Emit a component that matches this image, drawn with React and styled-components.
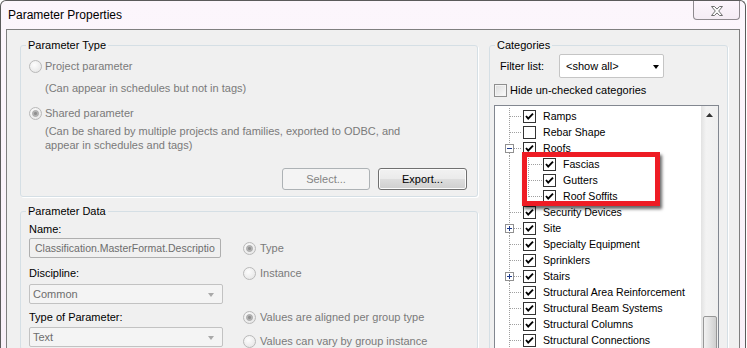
import React from 'react';
import styled, { createGlobalStyle } from 'styled-components';

const GlobalStyle = createGlobalStyle`
  html, body {
    margin: 0;
    padding: 0;
    background: #fff;
  }
  body {
    font-family: "Liberation Sans", Arial, sans-serif;
    font-size: 11px;
    color: #000;
  }
`;

const Window = styled.div`
  width: 746px;
  height: 348px;
  box-sizing: border-box;
  border: 1px solid #5b5b5b;
  border-bottom: none;
  border-radius: 6px 6px 0 0;
  background: linear-gradient(#fcf6fc, #f8f0f8);
  padding: 0 5px;
  display: flex;
  flex-direction: column;
  overflow: hidden;
`;

const TitleBar = styled.div`
  height: 28px;
  flex-shrink: 0;
  display: flex;
  justify-content: space-between;
  align-items: flex-start;
`;

const Title = styled.div`
  font-size: 12px;
  line-height: 14px;
  padding: 7px 0 0 2px;
`;

const CloseButton = styled.div`
  width: 47px;
  height: 19px;
  box-sizing: border-box;
  border: 1px solid #8e8a8e;
  border-top: none;
  border-radius: 0 0 4px 4px;
  background: linear-gradient(#fcf5fc, #f4ecf4);
  display: flex;
  align-items: center;
  justify-content: center;
  padding-top: 1px;
`;

const Client = styled.div`
  flex: 1;
  min-height: 0;
  background: #f0f0f0;
  border: 1px solid #7f7f7f;
  border-bottom: none;
  display: flex;
  gap: 11px;
  padding: 8px 11px 0 13px;
`;

const Column = styled.div`
  width: ${p => p.$width}px;
  flex-shrink: 0;
  display: flex;
  flex-direction: column;
  gap: 7px;
`;

const GroupBox = styled.fieldset`
  margin: 0;
  padding: 0;
  min-width: 0;
  border: 1px solid #d5dfe5;
  border-radius: 3px;
  box-shadow: 1px 1px 0 #fff;
  ${p => p.$grow && 'flex: 1;'}
`;

const Legend = styled.legend`
  margin-left: 5px;
  padding: 0 2px;
  line-height: 14px;
`;

const OptionRow = styled.div`
  display: flex;
  align-items: center;
  gap: ${p => p.$gap ?? 3}px;
  height: 16px;
  margin-top: ${p => p.$top}px;
  padding-left: ${p => p.$indent ?? 0}px;
  color: ${p => (p.$disabled ? '#7a7a7a' : '#000')};
`;

const RadioMark = styled.span`
  position: relative;
  width: 13px;
  height: 13px;
  box-sizing: border-box;
  border-radius: 50%;
  flex-shrink: 0;
  border: 1px solid #b9b9b9;
  background: radial-gradient(circle at 40% 35%, #fdfdfd, #e2e2e2);

  &::after {
    content: '';
    display: ${p => (p.$checked ? 'block' : 'none')};
    position: absolute;
    inset: 2px;
    box-sizing: border-box;
    border-radius: 50%;
    border: 1px solid #a2a2a2;
    background: radial-gradient(circle, #8f8f8f 30%, #c9c9c9 75%);
  }
`;

const Note = styled.div`
  color: #7a7a7a;
  line-height: 14px;
  margin-top: ${p => p.$top}px;
  padding-left: 24px;
`;

const ButtonRow = styled.div`
  display: flex;
  justify-content: flex-end;
  gap: 8px;
  margin-top: 16px;
  padding: 0 10px 6px 0;
`;

const PushButton = styled.button`
  width: ${p => p.$width}px;
  height: 22px;
  box-sizing: border-box;
  font-family: inherit;
  font-size: 11px;
  border-radius: 3px;
  padding: 0;
  border: 1px solid #707070;
  color: #000;
  background: linear-gradient(#f2f2f2 0%, #ebebeb 48%, #dddddd 52%, #cfcfcf 100%);
  box-shadow: inset 0 0 0 1px #fcfcfc;

  &:disabled {
    border-color: #adb2b5;
    color: #838383;
    background: #f4f4f4;
    box-shadow: none;
  }
`;

const DataGrid = styled.div`
  display: grid;
  grid-template-columns: 194px 1fr;
  column-gap: 20px;
  padding-left: 8px;
`;

const Stack = styled.div`
  display: flex;
  flex-direction: column;
`;

const FieldLabel = styled.div`
  line-height: 14px;
  margin-top: ${p => p.$top}px;
`;

const TextField = styled.div`
  width: 192px;
  height: 20px;
  box-sizing: border-box;
  margin-top: 2px;
  border: 1px solid #afafaf;
  border-radius: 2px;
  background: #f0f0f0;
  color: #6d6d6d;
  padding: 0 3px 0 5px;
  font-size: 10.5px;
  line-height: 18px;
  white-space: nowrap;
`;

const ComboBox = styled.div`
  width: ${p => p.$width}px;
  height: ${p => p.$height ?? 20}px;
  box-sizing: border-box;
  margin-top: ${p => p.$top ?? 0}px;
  border: 1px solid ${p => (p.$disabled ? '#c2c2c2' : '#c5c5c5')};
  border-radius: 2px;
  background: ${p => (p.$disabled ? '#f4f4f4' : '#fff')};
  color: ${p => (p.$disabled ? '#6d6d6d' : '#000')};
  display: flex;
  align-items: center;
  justify-content: space-between;
  padding: 0 ${p => (p.$disabled ? 8 : 4)}px 0 ${p => (p.$disabled ? 3 : 6)}px;
`;

const Arrow = styled.span`
  width: 0;
  height: 0;
  border-left: 3.5px solid transparent;
  border-right: 3.5px solid transparent;
  border-top: 4px solid ${p => (p.$disabled ? '#a9a9a9' : '#000')};
  margin-top: 1px;
`;

const CatBody = styled.div`
  display: flex;
  flex-direction: column;
  padding: 0 8px 0 4px;
  height: 100%;
`;

const FilterRow = styled.div`
  display: flex;
  align-items: center;
  height: 24px;
  margin-top: 2px;
`;

const FilterLabel = styled.span`
  width: 59px;
  margin-left: 6px;
`;

const CheckMark = styled.span`
  width: 13px;
  height: 13px;
  box-sizing: border-box;
  flex-shrink: 0;
  border: 1px solid #8f8f8f;
  background: linear-gradient(135deg, #dcdcdc, #fbfbfb);
  box-shadow: inset 0 0 0 1px #f4f4f4;
`;

const ListBox = styled.div`
  position: relative;
  flex: 1;
  margin-top: 7px;
  border: 1px solid #828790;
  background: #fff;
  display: flex;
  min-height: 0;
`;

const TreeRows = styled.div`
  flex: 1;
  padding-top: 2px;
  overflow: hidden;
`;

const TreeRow = styled.div`
  display: flex;
  align-items: center;
  height: 16px;
  white-space: nowrap;
`;

const TreeLabel = styled.span`
  margin-left: 7px;
  font-size: 10.6px;
`;

const ScrollBar = styled.div`
  width: 17px;
  flex-shrink: 0;
  display: flex;
  flex-direction: column;
  background: linear-gradient(to right, #e2e2e2, #f3f3f3 30%, #efefef);
`;

const ScrollButton = styled.div`
  height: 17px;
  display: flex;
  align-items: center;
  justify-content: center;
`;

const Thumb = styled.div`
  margin: 193px 1px 0 2px;
  height: 60px;
  border: 1px solid #979797;
  border-radius: 2px;
  background: linear-gradient(to right, #f1f1f1, #e1e1e1 50%, #cfcfcf);
  display: flex;
  align-items: flex-end;
  justify-content: center;
  padding-bottom: 4px;
`;

const Grip = styled.span`
  width: 6px;
  height: 5px;
  border-top: 1px solid #555;
  border-bottom: 1px solid #555;
  box-sizing: border-box;
  position: relative;

  &::after {
    content: '';
    position: absolute;
    left: 0;
    right: 0;
    top: 1px;
    border-top: 1px solid #555;
  }
`;

const Highlight = styled.div`
  position: absolute;
  left: 27px;
  top: 46px;
  width: 138px;
  height: 54px;
  box-sizing: border-box;
  border: 5px solid #ee1c24;
  box-shadow: 2px 3px 3px rgba(0, 0, 0, 0.6);
  pointer-events: none;
`;

const dots = { stroke: '#a0a0a0', strokeDasharray: '1 1', strokeWidth: 1 };

function Connector({ level, expander, last }) {
  const w = level === 1 ? 28 : 48;
  return (
    <svg width={w} height={16} style={{ flexShrink: 0 }}>
      {expander ? (
        <>
          <line x1={14.5} y1={0} x2={14.5} y2={4} {...dots} />
          <line x1={14.5} y1={13} x2={14.5} y2={16} {...dots} />
        </>
      ) : (
        <line x1={14.5} y1={0} x2={14.5} y2={16} {...dots} />
      )}
      {level === 1 && <line x1={expander ? 19 : 15} y1={8.5} x2={27} y2={8.5} {...dots} />}
      {level === 2 && (
        <>
          <line x1={33.5} y1={0} x2={33.5} y2={last ? 9 : 16} {...dots} />
          <line x1={34} y1={8.5} x2={47} y2={8.5} {...dots} />
        </>
      )}
      {expander && (
        <>
          <rect x={10.5} y={4.5} width={8} height={8} fill="#fff" stroke="#919191" />
          <line x1={12} y1={8.5} x2={17} y2={8.5} stroke="#1e3a8a" />
          {expander === 'plus' && <line x1={14.5} y1={6} x2={14.5} y2={11} stroke="#1e3a8a" />}
        </>
      )}
    </svg>
  );
}

function TreeCheck({ checked }) {
  return (
    <svg width={13} height={13} style={{ flexShrink: 0 }}>
      <rect x={0.5} y={0.5} width={12} height={12} fill="#fff" stroke="#333" />
      {checked && <polyline points="3,6 5.2,8.6 10,3.6" fill="none" stroke="#000" strokeWidth={1.9} />}
    </svg>
  );
}

const categories = [
  { label: 'Ramps', level: 1, checked: true },
  { label: 'Rebar Shape', level: 1, checked: false },
  { label: 'Roofs', level: 1, checked: true, expander: 'minus' },
  { label: 'Fascias', level: 2, checked: true },
  { label: 'Gutters', level: 2, checked: true },
  { label: 'Roof Soffits', level: 2, checked: true, last: true },
  { label: 'Security Devices', level: 1, checked: true },
  { label: 'Site', level: 1, checked: true, expander: 'plus' },
  { label: 'Specialty Equipment', level: 1, checked: true },
  { label: 'Sprinklers', level: 1, checked: true },
  { label: 'Stairs', level: 1, checked: true, expander: 'plus' },
  { label: 'Structural Area Reinforcement', level: 1, checked: true },
  { label: 'Structural Beam Systems', level: 1, checked: true },
  { label: 'Structural Columns', level: 1, checked: true },
  { label: 'Structural Connections', level: 1, checked: true },
];

export default function App() {
  return (
    <>
      <GlobalStyle />
      <Window>
        <TitleBar>
          <Title>Parameter Properties</Title>
          <CloseButton>
            <svg width={12} height={10} viewBox="-0.5 -0.5 12 10">
              <polygon
                points="0,0 3,0 5.5,2.6 8,0 11,0 7.2,4.5 11,9 8,9 5.5,6.4 3,9 0,9 3.8,4.5"
                fill="#fdfdfd"
                stroke="#6e6e6e"
                strokeLinejoin="round"
              />
            </svg>
          </CloseButton>
        </TitleBar>

        <Client>
          <Column $width={458}>
            <GroupBox>
              <Legend>Parameter Type</Legend>
              <OptionRow $top={6} $indent={8} $disabled>
                <RadioMark />
                Project parameter
              </OptionRow>
              <Note $top={7}>(Can appear in schedules but not in tags)</Note>
              <OptionRow $top={10} $indent={8} $disabled>
                <RadioMark $checked />
                Shared parameter
              </OptionRow>
              <Note $top={3}>
                (Can be shared by multiple projects and families, exported to ODBC, and
                <br />
                appear in schedules and tags)
              </Note>
              <ButtonRow>
                <PushButton $width={88} disabled>Select...</PushButton>
                <PushButton $width={89}>Export...</PushButton>
              </ButtonRow>
            </GroupBox>

            <GroupBox $grow>
              <Legend>Parameter Data</Legend>
              <DataGrid>
                <Stack>
                  <FieldLabel $top={4}>Name:</FieldLabel>
                  <TextField>Classification.MasterFormat.Descriptio</TextField>
                  <FieldLabel $top={8}>Discipline:</FieldLabel>
                  <ComboBox $width={194} $top={4} $disabled>
                    Common
                    <Arrow $disabled />
                  </ComboBox>
                  <FieldLabel $top={6}>Type of Parameter:</FieldLabel>
                  <ComboBox $width={194} $top={3} $disabled>
                    Text
                    <Arrow $disabled />
                  </ComboBox>
                </Stack>
                <Stack>
                  <OptionRow $top={22} $gap={4} $disabled>
                    <RadioMark $checked />
                    Type
                  </OptionRow>
                  <OptionRow $top={9} $gap={4} $disabled>
                    <RadioMark />
                    Instance
                  </OptionRow>
                  <OptionRow $top={28} $gap={4} $disabled>
                    <RadioMark $checked />
                    Values are aligned per group type
                  </OptionRow>
                  <OptionRow $top={8} $gap={4} $disabled>
                    <RadioMark />
                    Values can vary by group instance
                  </OptionRow>
                </Stack>
              </DataGrid>
            </GroupBox>
          </Column>

          <Column $width={239}>
            <GroupBox $grow>
              <Legend>Categories</Legend>
              <CatBody>
                <FilterRow>
                  <FilterLabel>Filter list:</FilterLabel>
                  <ComboBox $width={105} $height={24}>
                    &lt;show all&gt;
                    <Arrow />
                  </ComboBox>
                </FilterRow>
                <OptionRow $top={4}>
                  <CheckMark />
                  Hide un-checked categories
                </OptionRow>
                <ListBox>
                  <TreeRows>
                    {categories.map(item => (
                      <TreeRow key={item.label}>
                        <Connector level={item.level} expander={item.expander} last={item.last} />
                        <TreeCheck checked={item.checked} />
                        <TreeLabel>{item.label}</TreeLabel>
                      </TreeRow>
                    ))}
                  </TreeRows>
                  <ScrollBar>
                    <ScrollButton>
                      <svg width={7} height={4}>
                        <polygon points="0,4 3.5,0 7,4" fill="#333" />
                      </svg>
                    </ScrollButton>
                    <Thumb>
                      <Grip />
                    </Thumb>
                  </ScrollBar>
                  <Highlight />
                </ListBox>
              </CatBody>
            </GroupBox>
          </Column>
        </Client>
      </Window>
    </>
  );
}
